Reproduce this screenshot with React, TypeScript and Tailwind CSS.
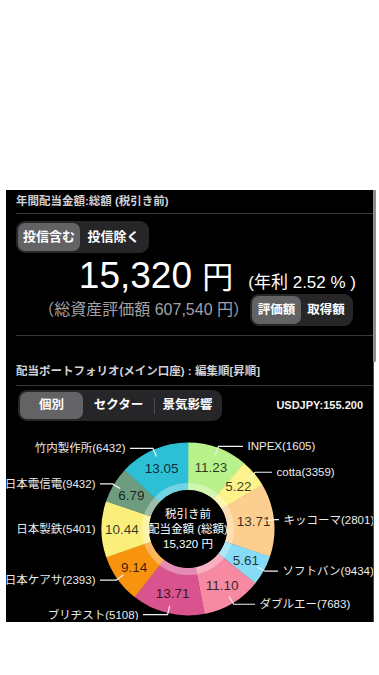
import React from "react";

const CX = 182;
const CY = 108;
const R_OUT = 86.5;
const R_IN = 39;

type Seg = { name: string; v: number; c: string; end: number; line?: boolean };

const segs: Seg[] = [
  { name: "INPEX(1605)", v: 11.23, c: "#b9f28a", end: 243 },
  { name: "cotta(3359)", v: 5.22, c: "#fdf38a", end: 272 },
  { name: "キッコーマ(2801)", v: 13.71, c: "#fcce90", end: 279 },
  { name: "ソフトバン(9434)", v: 5.61, c: "#86dbf5", end: 278 },
  { name: "ダブルエー(7683)", v: 11.1, c: "#f68aa2", end: 255 },
  { name: "ブリヂスト(5108)", v: 13.71, c: "#d9548f", end: 143 },
  { name: "日本ケアサ(2393)", v: 9.14, c: "#f8930f", end: 100 },
  { name: "日本製鉄(5401)", v: 10.44, c: "#fbef7c", end: 100, line: false },
  { name: "日本電信電(9432)", v: 6.79, c: "#6d9d7e", end: 100 },
  { name: "竹内製作所(6432)", v: 13.05, c: "#2dbfd6", end: 130 },
];

function pt(r: number, deg: number): [number, number] {
  const a = (deg * Math.PI) / 180;
  return [CX + r * Math.sin(a), CY - r * Math.cos(a)];
}

function arcPath(r0: number, r1: number, a0: number, a1: number) {
  const large = a1 - a0 > 180 ? 1 : 0;
  const [x0, y0] = pt(r1, a0);
  const [x1, y1] = pt(r1, a1);
  const [x2, y2] = pt(r0, a1);
  const [x3, y3] = pt(r0, a0);
  return `M${x0} ${y0} A${r1} ${r1} 0 ${large} 1 ${x1} ${y1} L${x2} ${y2} A${r0} ${r0} 0 ${large} 0 ${x3} ${y3} Z`;
}

function Donut() {
  let acc = 0;
  const items = segs.map((s) => {
    const a0 = (acc / 100) * 360;
    acc += s.v;
    const a1 = (acc / 100) * 360;
    const mid = (a0 + a1) / 2;
    return { ...s, a0, a1, mid };
  });
  return (
    <svg width={367} height={199} className="block">
      {items.map((s) => (
        <path key={s.name} d={arcPath(R_IN, R_OUT, s.a0, s.a1 + 0.3)} fill={s.c} />
      ))}
      <circle cx={CX} cy={CY} r={42.5} fill="none" stroke="rgba(255,255,255,0.33)" strokeWidth={7} />
      <circle cx={CX} cy={CY} r={R_IN} fill="#000" />
      {items.map((s) => {
        const [x, y] = pt(66, s.mid);
        return (
          <text
            key={"v" + s.name}
            x={x}
            y={y}
            fontSize={13.5}
            fill="rgba(0,0,0,0.78)"
            textAnchor="middle"
            dominantBaseline="central"
          >
            {s.v.toFixed(2)}
          </text>
        );
      })}
      {items.map((s) => {
        const [sx, sy] = pt(79, s.mid);
        const [ex, ey] = pt(88, s.mid);
        const right = s.mid < 180;
        const endX = s.end - 6;
        const tx = right ? endX + 4.5 : endX - 4.5;
        return (
          <g key={"l" + s.name}>
            {s.line !== false && (
              <polyline
                points={`${sx},${sy} ${ex},${ey} ${endX},${ey}`}
                fill="none"
                stroke="#f2f2f2"
                strokeWidth={1.2}
              />
            )}
            <text
              x={tx}
              y={ey}
              fontSize={11.5}
              fill="#ececec"
              textAnchor={right ? "start" : "end"}
              dominantBaseline="central"
            >
              {s.name}
            </text>
          </g>
        );
      })}
      <g fill="#fff" fontSize={11.5} textAnchor="middle" dominantBaseline="central">
        <text x={CX} y={CY - 15}>税引き前</text>
        <text x={CX} y={CY}>配当金額 (総額)</text>
        <text x={CX} y={CY + 14.5}>15,320 円</text>
      </g>
    </svg>
  );
}

export default function App() {
  return (
    <div className="min-h-[675px] w-full bg-white pt-[190px] font-['Liberation_Sans','Noto_Sans_CJK_JP',sans-serif]">
      <div className="relative ml-[6px] w-[368px]">
        <div className="h-[432px] w-[368px] overflow-hidden border-r border-[#4a4a4c] bg-black">
          <div className="ml-[10px] border-b border-[#38383a] pb-[9px]">
            <div className="flex h-[24px] items-center border-b border-[#38383a] text-[11.5px] font-bold text-[#d1d1d6]">
              年間配当金額:総額 (税引き前)
            </div>
            <div className="mt-[7px] flex h-[32px] w-[133px] items-center rounded-[9px] bg-[#262628] p-[2px] text-[13px] font-bold text-white">
              <div className="flex h-full w-[62px] items-center justify-center rounded-[7px] bg-[#636366]">投信含む</div>
              <div className="flex h-full w-[67px] items-center justify-center">投信除く</div>
            </div>
            <div className="mt-[4px] flex h-[37px] items-baseline justify-end pr-[17px] leading-none text-white">
              <span className="text-[37px]">
                15,320 <span className="text-[31px]">円</span>
              </span>
              <span className="ml-[15px] text-[17px]">(年利 2.52 % )</span>
            </div>
            <div className="flex h-[32px] items-center justify-end pr-[20px]">
              <span className="text-[16px] text-[#a1a1a6]">（総資産評価額 607,540 円）</span>
              <div className="ml-[1px] flex h-[32px] w-[103px] items-center rounded-[9px] bg-[#262628] p-[2px] text-[12.5px] font-bold text-white">
                <div className="flex h-full w-[49px] items-center justify-center rounded-[7px] bg-[#636366]">評価額</div>
                <div className="flex h-full w-[50px] items-center justify-center">取得額</div>
              </div>
            </div>
          </div>
          <div className="ml-[10px]">
            <div className="mt-[23px] flex h-[27px] items-center border-b border-[#38383a] text-[11.5px] font-bold text-[#d1d1d6]">
              配当ポートフォリオ(メイン口座) : 編集順[昇順]
            </div>
            <div className="mt-[4px] flex items-center justify-between pr-[10px]">
              <div className="ml-[2px] flex h-[31px] w-[204px] items-center rounded-[9px] bg-[#262628] p-[2px] text-[12.5px] font-bold text-white">
                <div className="flex h-full w-[63px] items-center justify-center rounded-[7px] bg-[#636366]">個別</div>
                <div className="flex h-full w-[71px] items-center justify-center">セクター</div>
                <div className="h-[16px] w-px bg-[#4a4a4c]" />
                <div className="flex h-full w-[65px] items-center justify-center">景気影響</div>
              </div>
              <span className="text-[11px] font-bold text-[#f2f2f2]">USDJPY:155.200</span>
            </div>
          </div>
          <Donut />
        </div>
        <div className="absolute left-[367px] top-0 h-[172px] w-[3px] rounded-b-[2px] bg-[#8e8e93]" />
      </div>
    </div>
  );
}
